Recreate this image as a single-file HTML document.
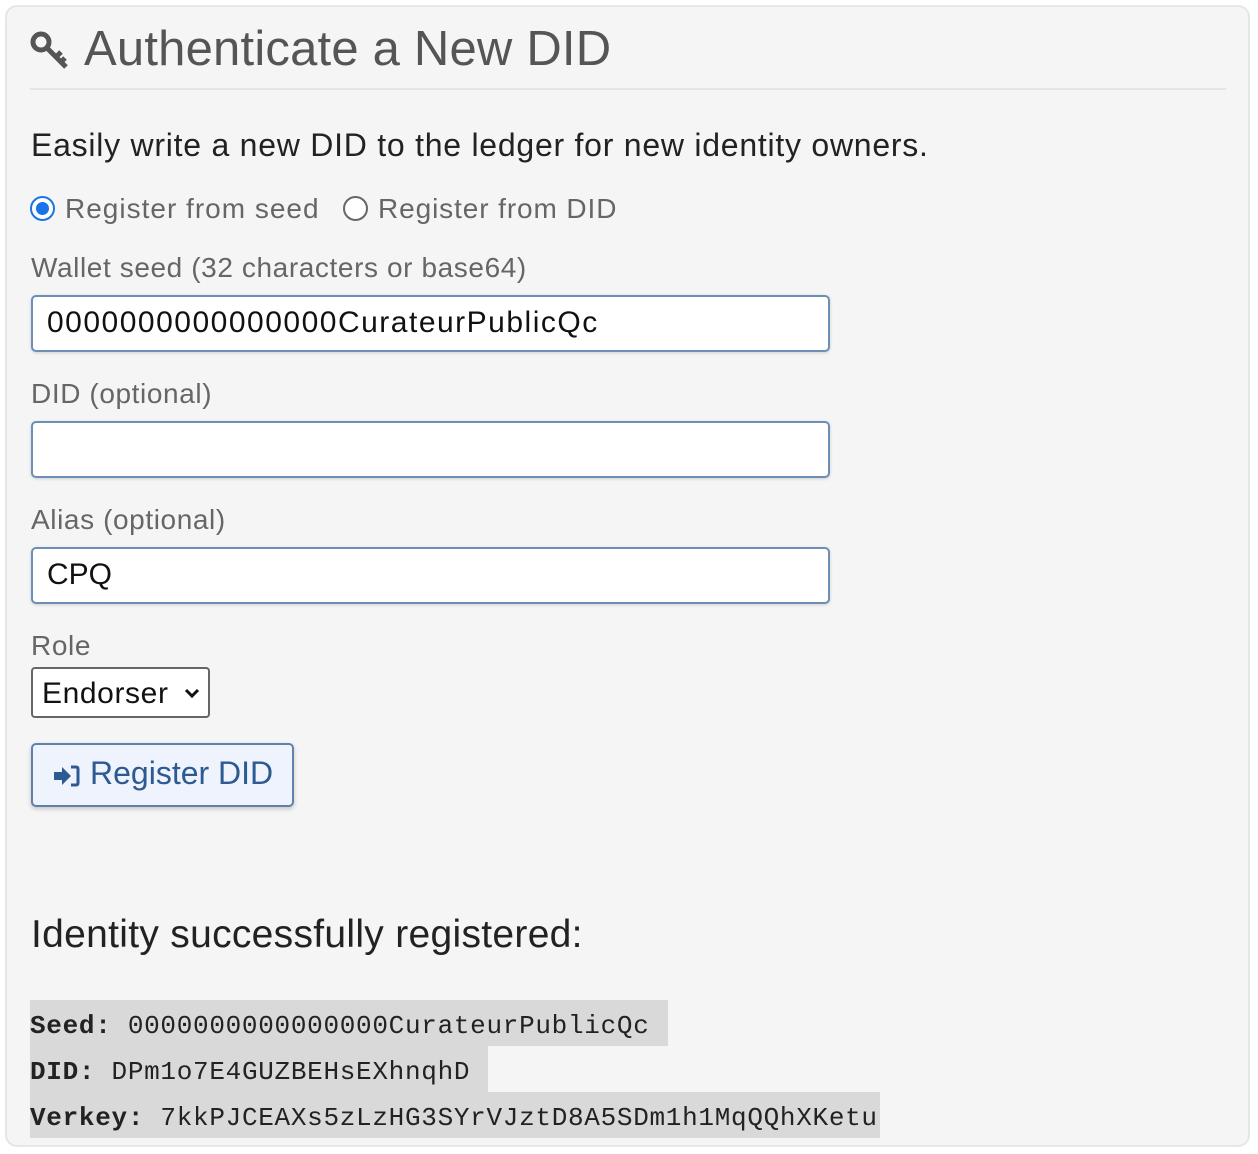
<!DOCTYPE html>
<html><head><meta charset="utf-8"><style>
*{box-sizing:border-box;margin:0;padding:0}
body{width:1258px;height:1154px;background:#fff;font-family:"Liberation Sans",sans-serif;position:relative;overflow:hidden}
.panel{position:absolute;left:5px;top:5px;width:1245px;height:1142px;background:#f5f5f5;border:2px solid #e6e6e6;border-radius:12px}
.a{position:absolute;white-space:nowrap}
h1{position:absolute;left:84px;top:21px;font-size:49px;font-weight:normal;color:#555;letter-spacing:0.2px}
.hr{position:absolute;left:30px;top:88px;width:1196px;height:2px;background:#e4e4e4}
.lbl{font-size:28px;color:#666;letter-spacing:0.6px}
.inp{position:absolute;left:31px;width:799px;height:57px;background:#fff;border:2px solid #6d8fb5;border-radius:5px;font-size:30px;color:#111;padding:9px 0 0 14px;box-shadow:0 1px 3px rgba(0,0,0,.15)}
.mono{position:absolute;left:30px;height:46px;background:#d9d9d9;font-family:"Liberation Mono",monospace;font-size:26px;letter-spacing:0.7px;color:#222;padding-top:11px}
.mono b{font-weight:bold}
</style></head><body>
<div class="panel"></div>
<svg class="a" style="left:30px;top:31px" width="40" height="40" viewBox="0 0 40 40"><circle cx="11" cy="11" r="8" fill="none" stroke="#555" stroke-width="5"/><path d="M16 16 L36 36 M26 26 L31 21 M31 31 L35 27" stroke="#555" stroke-width="5" fill="none"/></svg>
<h1>Authenticate a New DID</h1>
<div class="hr"></div>
<div class="a" style="left:31px;top:127px;font-size:32px;color:#222;letter-spacing:0.75px">Easily write a new DID to the ledger for new identity owners.</div>
<div class="a" style="left:30px;top:196px;width:25px;height:25px;border-radius:50%;border:2px solid #1a73e8;background:#fff"><div style="position:absolute;left:4px;top:4px;width:13px;height:13px;border-radius:50%;background:#1a73e8"></div></div>
<div class="a lbl" style="left:65px;top:193px;letter-spacing:1px">Register from seed</div>
<div class="a" style="left:343px;top:196px;width:25px;height:25px;border-radius:50%;border:2px solid #666;background:#fff"></div>
<div class="a lbl" style="left:378px;top:193px;letter-spacing:0.9px">Register from DID</div>
<div class="a lbl" style="left:31px;top:252px">Wallet seed (32 characters or base64)</div>
<div class="inp" style="top:295px;letter-spacing:1.5px">0000000000000000CurateurPublicQc</div>
<div class="a lbl" style="left:31px;top:378px">DID (optional)</div>
<div class="inp" style="top:421px"></div>
<div class="a lbl" style="left:31px;top:504px">Alias (optional)</div>
<div class="inp" style="top:547px">CPQ</div>
<div class="a lbl" style="left:31px;top:630px">Role</div>
<div class="a" style="left:31px;top:667px;width:179px;height:51px;background:#fff;border:2px solid #666;border-radius:4px;font-size:30px;color:#111;padding:8px 0 0 9px;letter-spacing:0.6px">Endorser<svg style="position:absolute;right:8px;top:19px" width="16" height="12" viewBox="0 0 16 12"><path d="M2 2 L8 8 L14 2" stroke="#111" stroke-width="3" fill="none"/></svg></div>
<div class="a" style="left:31px;top:743px;width:263px;height:64px;background:#eef3fd;border:2px solid #5f82ab;border-radius:5px;box-shadow:0 2px 5px rgba(0,0,0,.2)">
<svg class="a" style="left:19px;top:19px" width="28" height="24" viewBox="0 0 28 24"><path d="M2 8 H10 V3 L19 12 L10 21 V16 H2 Z" fill="#2d5a91"/><path d="M19 3 H24 Q26 3 26 5 V19 Q26 21 24 21 H19" stroke="#2d5a91" stroke-width="3" fill="none"/></svg>
<div class="a" style="left:57px;top:10px;font-size:32px;color:#2d5a91">Register DID</div></div>
<div class="a" style="left:31px;top:913px;font-size:39px;color:#222;letter-spacing:0.3px">Identity successfully registered:</div>
<div class="mono" style="top:1000px;width:638px"><b>Seed:</b> 0000000000000000CurateurPublicQc</div>
<div class="mono" style="top:1046px;width:458px"><b>DID:</b> DPm1o7E4GUZBEHsEXhnqhD</div>
<div class="mono" style="top:1092px;width:850px"><b>Verkey:</b> 7kkPJCEAXs5zLzHG3SYrVJztD8A5SDm1h1MqQQhXKetu</div>
</body></html>
